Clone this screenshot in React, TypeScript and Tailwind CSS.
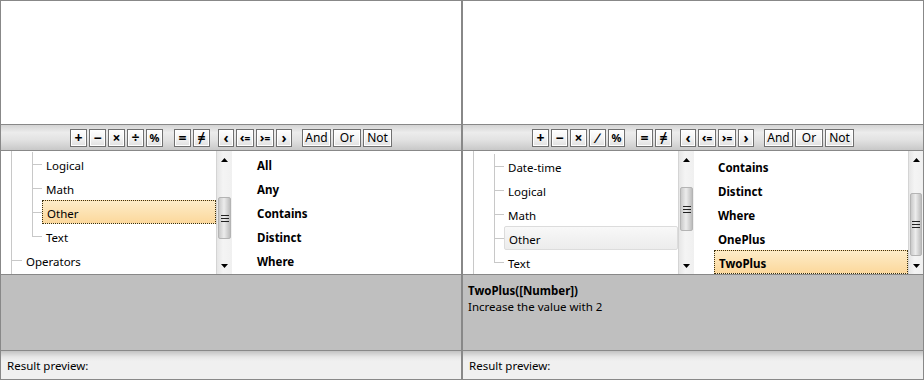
import React from "react";

const FONT = "font-['Noto_Sans',sans-serif]";

function Btn({ children, w, bold = true }: { children: React.ReactNode; w: string; bold?: boolean }) {
  return (
    <div
      className={`${w} h-[18px] flex items-center justify-center border border-[#707070] bg-[linear-gradient(to_bottom,#ffffff,#f4f4f4_50%,#e0e0e0)] shadow-[inset_0_0_0_1px_#ffffff] text-black leading-none [font-variant-ligatures:none] ${bold ? "font-bold text-[14px]" : "text-[12px]"}`}
    >
      {children}
    </div>
  );
}

function Toolbar({ fourth }: { fourth: string }) {
  return (
    <div className="h-[26px] border-b border-[#888888] bg-[linear-gradient(to_bottom,#d4d4d4,#ececec_30%,#e2e2e2_60%,#c8c8c8)] flex items-center justify-center">
      <div className="flex gap-[2px]">
        <Btn w="w-[17px]">+</Btn>
        <Btn w="w-[17px]">−</Btn>
        <Btn w="w-[17px]">×</Btn>
        <Btn w="w-[17px]">{fourth}</Btn>
        <Btn w="w-[17px]"><span className="text-[11px]">%</span></Btn>
      </div>
      <div className="flex gap-[2px] ml-[11px]">
        <Btn w="w-[17px]">=</Btn>
        <Btn w="w-[17px]">≠</Btn>
      </div>
      <div className="flex gap-[2px] ml-[8px]">
        <Btn w="w-[16px]">‹</Btn>
        <Btn w="w-[18px]">
          <span className="text-[13px]">‹</span>
          <span className="text-[10px]">=</span>
        </Btn>
        <Btn w="w-[18px]">
          <span className="text-[13px]">›</span>
          <span className="text-[10px]">=</span>
        </Btn>
        <Btn w="w-[16px]">›</Btn>
      </div>
      <div className="flex gap-[2px] ml-[10px]">
        <Btn w="w-[29px]" bold={false}>And</Btn>
        <Btn w="w-[28px]" bold={false}>Or</Btn>
        <Btn w="w-[29px]" bold={false}>Not</Btn>
      </div>
    </div>
  );
}

function ScrollBar({ thumbTop, thumbH, w }: { thumbTop: number; thumbH: number; w: string }) {
  return (
    <div className={`${w} relative h-full shrink-0 border-l border-[#d4d4d4] bg-[linear-gradient(to_right,#e6e6e6,#f4f4f4_40%,#f0f0f0)]`}>
      <div className="absolute left-0 right-0 top-0 h-[17px] flex items-center justify-center">
        <svg width="7" height="4" viewBox="0 0 7 4"><path d="M3.5 0 L7 4 L0 4 Z" fill="#000" /></svg>
      </div>
      <div className="absolute left-0 right-0 bottom-0 h-[17px] flex items-center justify-center">
        <svg width="7" height="4" viewBox="0 0 7 4"><path d="M0 0 L7 0 L3.5 4 Z" fill="#000" /></svg>
      </div>
      <div
        className="absolute left-[1px] right-[1px] border border-[#b4b4b4] rounded-[2px] bg-[linear-gradient(to_right,#c9c9c9,#ececec_45%,#e0e0e0_60%,#bdbdbd)] flex flex-col items-center justify-center gap-[2px]"
        style={{ top: thumbTop, height: thumbH }}
      >
        <div className="w-[8px] h-[1px] bg-[#222]" />
        <div className="w-[8px] h-[1px] bg-[#222]" />
        <div className="w-[8px] h-[1px] bg-[#222]" />
      </div>
    </div>
  );
}

type TreeRow = { label: string; level: 0 | 1; last?: boolean; state?: "sel" | "hover" };

function Tree({ rows, pt }: { rows: TreeRow[]; pt: string }) {
  return (
    <div className={`w-[215px] h-full shrink-0 bg-white relative overflow-hidden ${pt}`}>
      <div className="absolute left-[10px] top-0 bottom-0 w-[1px] bg-[#c8c8c8]" />
      {rows.map((r, i) => (
        <div key={i} className="relative h-[24px]">
          {r.level === 1 ? (
            <>
              <div className={`absolute left-[31px] top-0 w-[1px] bg-[#c8c8c8] ${r.last ? "h-[12px]" : "h-[24px]"}`} />
              <div className="absolute left-[31px] top-[12px] w-[10px] h-[1px] bg-[#c8c8c8]" />
              <div
                className={`absolute left-[41px] right-0 top-0 h-[24px] flex items-center pl-[4px] pt-[3px] text-[11.5px] text-black ${
                  r.state === "sel"
                    ? "border border-dotted border-[#3a3010] bg-[linear-gradient(to_bottom,#fdecc8,#fcd89c)] pl-[3px]"
                    : r.state === "hover"
                    ? "border border-[#dcdcdc] rounded-[2px] bg-[linear-gradient(to_bottom,#f8f8f8,#ececec)] pl-[3px]"
                    : ""
                }`}
              >
                {r.label}
              </div>
            </>
          ) : (
            <>
              <div className="absolute left-[10px] top-[12px] w-[11px] h-[1px] bg-[#c8c8c8]" />
              <div className="absolute left-[21px] right-0 top-0 h-[24px] flex items-center pl-[4px] pt-[3px] text-[11.5px] text-black">
                {r.label}
              </div>
            </>
          )}
        </div>
      ))}
    </div>
  );
}

function List({ items, sel, pl, pt, w }: { items: string[]; sel?: number; pl: string; pt: string; w: string }) {
  return (
    <div className={`${w} h-full bg-white overflow-hidden ${pt}`}>
      {items.map((it, i) => (
        <div key={i} className={`h-[24px] flex ${pl}`}>
          <div
            className={`flex-1 flex items-center pl-[4px] pt-[3px] font-bold text-[11.5px] text-black ${
              i === sel ? "border border-dotted border-[#3a3010] bg-[linear-gradient(to_bottom,#fdecc8,#fcd89c)] pl-[3px]" : ""
            }`}
          >
            {it}
          </div>
        </div>
      ))}
    </div>
  );
}

function Panel({ right }: { right: boolean }) {
  return (
    <div className={`w-[462px] h-[380px] border border-[#888888] flex flex-col ${FONT}`}>
      <div className="h-[124px] bg-white border-b border-[#888888]" />
      <Toolbar fourth={right ? "∕" : "÷"} />
      <div className="h-[124px] flex border-b border-[#888888] bg-white">
        {right ? (
          <>
            <Tree
              pt="pt-[3px]"
              rows={[
                { label: "Date-time", level: 1 },
                { label: "Logical", level: 1 },
                { label: "Math", level: 1 },
                { label: "Other", level: 1, state: "hover" },
                { label: "Text", level: 1, last: true },
              ]}
            />
            <ScrollBar w="w-[16px]" thumbTop={36} thumbH={44} />
            <List w="w-[214px]" pl="pl-[20px]" pt="pt-[3px]" items={["Contains", "Distinct", "Where", "OnePlus", "TwoPlus"]} sel={4} />
            <ScrollBar w="w-[15px]" thumbTop={42} thumbH={63} />
          </>
        ) : (
          <>
            <Tree
              pt="pt-[1px]"
              rows={[
                { label: "Logical", level: 1 },
                { label: "Math", level: 1 },
                { label: "Other", level: 1, state: "sel" },
                { label: "Text", level: 1, last: true },
                { label: "Operators", level: 0 },
              ]}
            />
            <ScrollBar w="w-[16px]" thumbTop={46} thumbH={42} />
            <List w="flex-1" pl="pl-[21px]" pt="pt-[1px]" items={["All", "Any", "Contains", "Distinct", "Where"]} />
          </>
        )}
      </div>
      <div className="h-[76px] bg-[#bfbfbf] border-b border-[#888888] pl-[5px] pt-[8px] text-[11.5px] leading-[16px] text-black">
        {right && (
          <>
            <div className="font-bold">TwoPlus([Number])</div>
            <div>Increase the value with 2</div>
          </>
        )}
      </div>
      <div className="flex-1 bg-[linear-gradient(to_bottom,#c2c2c2,#e6e6e6_6px,#f0f0f0_10px)] flex items-center pl-[6px] pt-[2px] text-[11.5px] text-black">
        Result preview:
      </div>
    </div>
  );
}

export default function App() {
  return (
    <div className="w-[924px] h-[380px] flex bg-white overflow-hidden">
      <Panel right={false} />
      <Panel right={true} />
    </div>
  );
}
